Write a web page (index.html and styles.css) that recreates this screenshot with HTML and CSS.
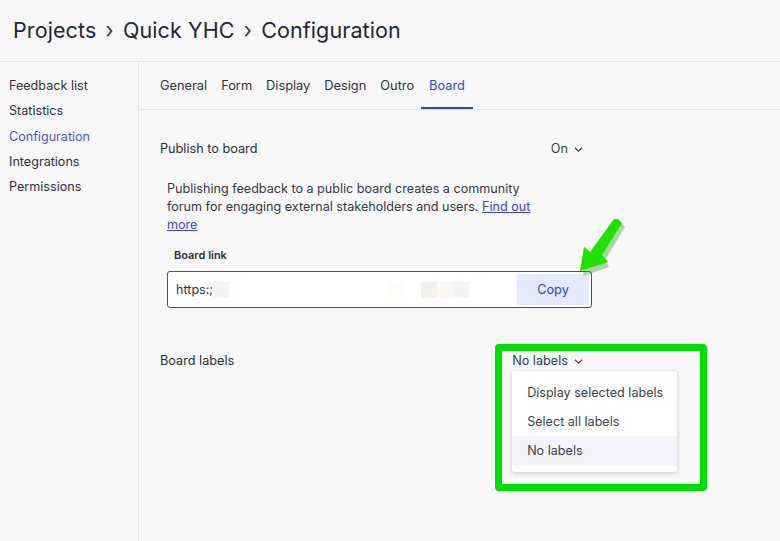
FILE: index.html
```html
<!DOCTYPE html>
<html lang="en">
<head>
    <meta charset="UTF-8">
    <meta name="viewport" content="width=device-width, initial-scale=1.0">
    <title>Configuration</title>
    <link rel="stylesheet" href="styles.css">
</head>
<body>
    <header class="topbar">
        <h1 class="crumbs">
            <span>Projects</span>
            <span class="sep">&#8250;</span>
            <span>Quick YHC</span>
            <span class="sep">&#8250;</span>
            <span>Configuration</span>
        </h1>
    </header>

    <div class="layout">
        <aside class="sidebar">
            <a href="#">Feedback list</a>
            <a href="#">Statistics</a>
            <a href="#" class="active">Configuration</a>
            <a href="#">Integrations</a>
            <a href="#">Permissions</a>
        </aside>

        <main class="main">
            <nav class="tabs">
                <a href="#">General</a>
                <a href="#">Form</a>
                <a href="#">Display</a>
                <a href="#">Design</a>
                <a href="#">Outro</a>
                <a href="#" class="active">Board</a>
            </nav>

            <div class="content">
                <div class="row">
                    <span>Publish to board</span>
                    <span class="select">On <svg width="11" height="11" viewBox="0 0 10 10"><path d="M1.8 3.4 L5 6.6 L8.2 3.4" fill="none" stroke="currentColor" stroke-width="1.1"/></svg></span>
                </div>

                <div class="details">
                    <p class="desc">Publishing feedback to a public board creates a community forum for engaging external stakeholders and users. <a href="#">Find out more</a></p>
                    <div class="field-label">Board link</div>
                    <div class="link-box">
                        <span class="url">https:;<i class="blur b1"></i><i class="blur b2"></i><i class="blur b3"></i><i class="blur b4"></i><i class="blur b5"></i></span>
                        <button class="copy">Copy</button>
                    </div>
                </div>

                <div class="row labels-row">
                    <span>Board labels</span>
                    <div class="select-wrap">
                        <span class="select">No labels <svg width="11" height="11" viewBox="0 0 10 10"><path d="M1.8 3.4 L5 6.6 L8.2 3.4" fill="none" stroke="currentColor" stroke-width="1.1"/></svg></span>
                        <ul class="menu">
                            <li>Display selected labels</li>
                            <li>Select all labels</li>
                            <li class="current">No labels</li>
                        </ul>
                    </div>
                </div>
            </div>
        </main>
    </div>

    <!-- annotations -->
    <div class="highlight"></div>
    <svg class="arrow" width="60" height="70" viewBox="0 0 60 70">
        <polygon points="42,2 46,6 26,39 30,46 4,55 7,32 12,36 38,2" fill="#0a9a00" opacity="0.35" transform="translate(1,2)"/>
        <polygon points="40,0 44,4 24,36 30,43 2,52 6,28 12,33 36,0" fill="#22e000"/>
    </svg>
</body>
</html>
```

FILE: styles.css
```css
* {
    margin: 0;
    padding: 0;
    box-sizing: border-box;
}

body {
    font-family: Inter, "Noto Sans", sans-serif;
    background-color: #f8f8f8;
    color: #2b2f3a;
    width: 780px;
    height: 541px;
    overflow: hidden;
    position: relative;
}

a {
    text-decoration: none;
    color: inherit;
}

.topbar {
    height: 62px;
    border-bottom: 1px solid #e2e3e6;
    display: flex;
    align-items: center;
    padding: 0 0 2px 13px;
}

.crumbs {
    font-size: 21.5px;
    font-weight: 400;
    display: flex;
    gap: 9px;
    color: #232736;
    letter-spacing: 0.1px;
}

.crumbs .sep {
    font-size: 22px;
    color: #3a3e4a;
}

.layout {
    display: flex;
    height: 479px;
}

.sidebar {
    width: 139px;
    border-right: 1px solid #e2e3e6;
    padding: 11px 0 0 9px;
    display: flex;
    flex-direction: column;
}

.sidebar a {
    font-size: 12.6px;
    line-height: 25.3px;
    color: #2e3240;
}

.sidebar a.active {
    color: #4a55e0;
}

.main {
    flex: 1;
}

.tabs {
    height: 48px;
    border-bottom: 1px solid #e2e3e6;
    display: flex;
    padding-left: 14px;
}

.tabs a {
    font-size: 12.8px;
    padding: 0 7px;
    line-height: 48px;
    color: #2e3240;
    border-bottom: 2px solid transparent;
}

.tabs a.active {
    color: #2b44d8;
    border-bottom-color: #2b44d8;
    padding: 0 8px 0 8px;
}

.content {
    padding: 30px 0 0 21px;
    width: 445px;
}

.row {
    display: flex;
    justify-content: space-between;
    font-size: 12.7px;
    line-height: 18px;
}

.select-wrap {
    position: relative;
}

.select {
    display: flex;
    align-items: center;
    gap: 5px;
    color: #3b3f4c;
}

.details {
    padding: 22px 0 0 7px;
}

.desc {
    font-size: 12.6px;
    line-height: 18px;
    width: 372px;
    color: #343845;
}

.desc a {
    color: #3d3fe6;
    text-decoration: underline;
}

.field-label {
    font-size: 11px;
    font-weight: 600;
    line-height: 14px;
    padding: 14px 0 0 7px;
    color: #2b2f3a;
}

.link-box {
    margin-top: 9px;
    width: 425px;
    height: 37px;
    border: 1px solid #4d5262;
    border-radius: 3px;
    background-color: #fff;
    display: flex;
    align-items: center;
    justify-content: space-between;
    padding: 2px;
}

.url {
    font-size: 12.6px;
    padding-left: 6px;
    color: #3a2e46;
    display: flex;
    align-items: center;
}

.blur {
    display: inline-block;
    width: 16px;
    height: 16px;
    background-color: #f1f5f9;
}

.b2 {
    margin-left: 160px;
    background-color: #fdfcf7;
}

.b3 {
    margin-left: 16px;
    background-color: #f5efec;
}

.b4 {
    background-color: #faf8f5;
}

.b5 {
    background-color: #f1f5f8;
}

.copy {
    width: 72px;
    height: 31px;
    border: none;
    border-radius: 2px;
    background-color: #e4eafb;
    color: #2b44d8;
    font-family: Inter, "Noto Sans", sans-serif;
    font-size: 12.7px;
}

.labels-row {
    margin-top: 44px;
}

.menu {
    position: absolute;
    top: 19px;
    left: 0;
    width: 165px;
    list-style: none;
    background-color: #fff;
    padding: 7px 0;
    border-radius: 2px;
    box-shadow: 0 1px 4px rgba(0, 0, 0, 0.22);
}

.menu li {
    height: 29px;
    line-height: 29px;
    padding-left: 15px;
    font-size: 12.6px;
    color: #3b3f4c;
    white-space: nowrap;
}

.menu li.current {
    background-color: #f3f5fa;
}

.highlight {
    position: absolute;
    left: 495px;
    top: 344px;
    width: 212px;
    height: 147px;
    border: 7px solid #00e000;
    border-radius: 4px;
}

.arrow {
    position: absolute;
    left: 578px;
    top: 219px;
}
```
